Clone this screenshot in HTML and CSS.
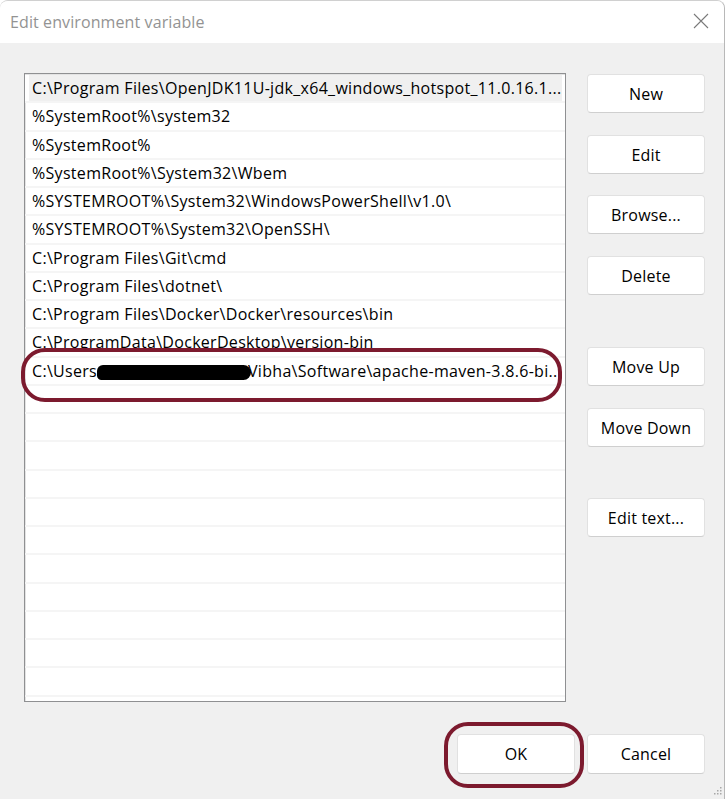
FILE: index.html
```html
<!DOCTYPE html>
<html>
<head>
<meta charset="utf-8">
<link rel="stylesheet" href="styles.css">
</head>
<body>
<div class="window">
  <div class="titlebar">
    <span class="title">Edit environment variable</span>
    <svg class="close" width="16" height="16" viewBox="0 0 16 16"><path d="M1 1L15 15M15 1L1 15" stroke="#7a7a7a" stroke-width="1.1" fill="none"/></svg>
  </div>
  <div class="content">
    <div class="main">
      <div class="list">
        <div class="row selected">C:\Program Files\OpenJDK11U-jdk_x64_windows_hotspot_11.0.16.1...</div>
        <div class="row">%SystemRoot%\system32</div>
        <div class="row">%SystemRoot%</div>
        <div class="row">%SystemRoot%\System32\Wbem</div>
        <div class="row">%SYSTEMROOT%\System32\WindowsPowerShell\v1.0\</div>
        <div class="row">%SYSTEMROOT%\System32\OpenSSH\</div>
        <div class="row">C:\Program Files\Git\cmd</div>
        <div class="row">C:\Program Files\dotnet\</div>
        <div class="row">C:\Program Files\Docker\Docker\resources\bin</div>
        <div class="row">C:\ProgramData\DockerDesktop\version-bin</div>
        <div class="row">C:\Users<span class="blob"></span>Vibha\Software\apache-maven-3.8.6-bi..</div>
        <div class="row"></div>
        <div class="row"></div>
        <div class="row"></div>
        <div class="row"></div>
        <div class="row"></div>
        <div class="row"></div>
        <div class="row"></div>
        <div class="row"></div>
        <div class="row"></div>
        <div class="row"></div>
        <div class="row"></div>
        <div class="row"></div>
      </div>
      <div class="side">
        <button class="btn b-new">New</button>
        <button class="btn b-edit">Edit</button>
        <button class="btn b-browse">Browse...</button>
        <button class="btn b-delete">Delete</button>
        <button class="btn b-up">Move Up</button>
        <button class="btn b-down">Move Down</button>
        <button class="btn b-text">Edit text...</button>
      </div>
    </div>
    <div class="footer">
      <button class="btn">OK</button>
      <button class="btn">Cancel</button>
    </div>
  </div>
  <div class="mark mark-row"></div>
  <div class="mark mark-ok"></div>
  <svg class="grip" width="10" height="10" viewBox="0 0 10 10">
    <g fill="#a8a8a8">
      <rect x="8" y="0" width="1.5" height="1.5"/>
      <rect x="5" y="3" width="1.5" height="1.5"/><rect x="8" y="3" width="1.5" height="1.5"/>
      <rect x="2" y="6" width="1.5" height="1.5"/><rect x="5" y="6" width="1.5" height="1.5"/><rect x="8" y="6" width="1.5" height="1.5"/>
    </g>
  </svg>
</div>
</body>
</html>
```
FILE: styles.css
```css
html, body {
  margin: 0;
  padding: 0;
  background: #ffffff;
}
body {
  width: 727px;
  height: 799px;
  overflow: hidden;
  font-family: "Open Sans", "Noto Sans", sans-serif;
}
.window {
  position: relative;
  width: 725px;
  height: 799px;
  background: #f0f0f0;
  border-right: 1px solid #b8b8b8;
  border-top: 1px solid #d0d0d0;
  border-top-left-radius: 8px;
  border-top-right-radius: 8px;
  box-sizing: border-box;
  overflow: hidden;
}
.titlebar {
  height: 42px;
  background: #ffffff;
  display: flex;
  align-items: center;
  justify-content: space-between;
  padding: 0 15px 0 10px;
}
.title {
  font-size: 16px;
  color: #939393;
  letter-spacing: 0.1px;
  margin-top: -1px;
}
.close {
  margin-top: -2px;
}
.content {
  padding: 30px 0 0 24px;
}
.main {
  display: flex;
  gap: 21px;
}
.list {
  width: 542px;
  height: 629px;
  box-sizing: border-box;
  background: #fff;
  border: 1px solid #8f9092;
  box-shadow: inset 1px 1px 0 #e3e3e3;
  overflow: hidden;
  padding-top: 1px;
}
.row {
  height: 28.25px;
  box-sizing: border-box;
  border-bottom: 2px solid #f5f5f5;
  padding-left: 7px;
  font-size: 16px;
  line-height: 27px;
  color: #000;
  white-space: nowrap;
  overflow: hidden;
  letter-spacing: 0.3px;
}
.row.selected {
  background: linear-gradient(to right, #fff 0, #fff 4px, #f0f0f0 4px, #f0f0f0 calc(100% - 3px), #fff calc(100% - 3px));
}
.blob {
  display: inline-block;
  width: 154px;
  height: 15px;
  background: #000;
  border-radius: 8px 10px 10px 6px;
  vertical-align: -3px;
  margin-left: 0;
  margin-right: -3px;
}
.side {
  display: flex;
  flex-direction: column;
  padding-top: 1px;
}
.btn {
  width: 118px;
  height: 39px;
  box-sizing: border-box;
  background: #fff;
  border: 1px solid #e1e1e1;
  border-bottom-color: #cfcfcf;
  border-radius: 4px;
  font-family: "Open Sans", "Noto Sans", sans-serif;
  font-size: 16px;
  color: #000;
  letter-spacing: 0.2px;
  padding: 0;
}
.b-edit, .b-browse, .b-delete, .b-down { margin-top: 22px; }
.b-browse { margin-top: 21px; }
.b-up { margin-top: 52px; }
.b-text { margin-top: 51px; }
.footer {
  display: flex;
  justify-content: flex-end;
  gap: 12px;
  margin-top: 32px;
  padding-right: 19px;
}
.footer .btn {
  height: 40px;
}
.mark {
  position: absolute;
  border: 4px solid #7c1a2e;
  box-sizing: border-box;
  border-radius: 24px;
}
.mark-row {
  left: 21px;
  top: 347px;
  width: 541px;
  height: 54px;
}
.mark-ok {
  left: 444px;
  top: 721px;
  width: 140px;
  height: 66px;
}
.grip {
  position: absolute;
  right: 2px;
  bottom: 2px;
}
```
